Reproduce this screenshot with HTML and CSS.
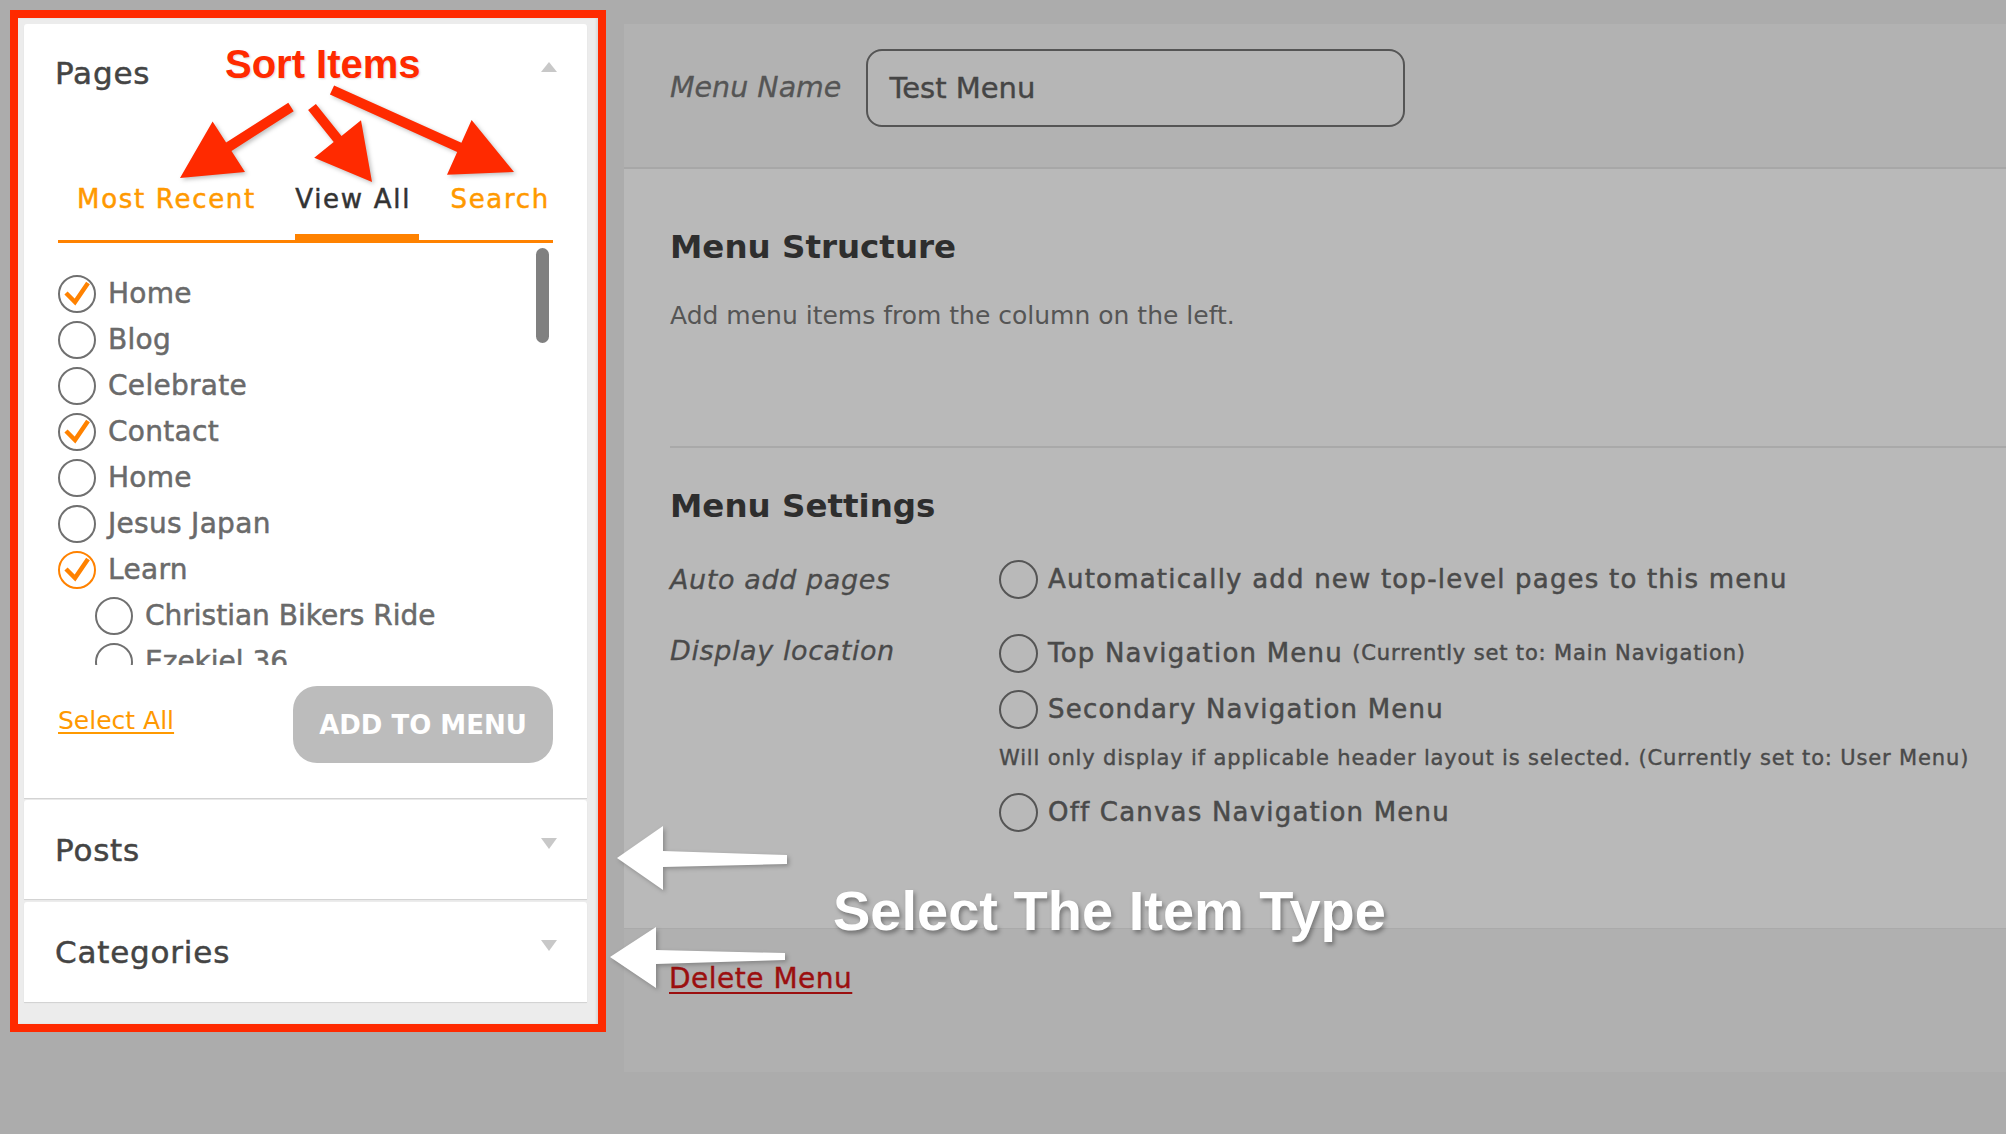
FILE: index.html
```html
<!DOCTYPE html>
<html>
<head>
<meta charset="utf-8">
<link rel="stylesheet" href="styles.css">
</head>
<body>
<div class="page">
  <aside class="frame">
    <section class="card pages">
      <div class="card-head">
        <span class="card-title">Pages</span>
        <span class="tri tri-up"></span>
      </div>
      <nav class="tabs">
        <span class="tab">Most Recent</span>
        <span class="tab active">View All</span>
        <span class="tab">Search</span>
      </nav>
      <ul class="list">
        <li class="row checked"><span class="check"><svg viewBox="0 0 38 38"><path d="M8 18 L17 27 L30 8"/></svg></span>Home</li>
        <li class="row"><span class="check"></span>Blog</li>
        <li class="row"><span class="check"></span>Celebrate</li>
        <li class="row checked"><span class="check"><svg viewBox="0 0 38 38"><path d="M8 18 L17 27 L30 8"/></svg></span>Contact</li>
        <li class="row"><span class="check"></span>Home</li>
        <li class="row"><span class="check"></span>Jesus Japan</li>
        <li class="row checked hot"><span class="check"><svg viewBox="0 0 38 38"><path d="M8 18 L17 27 L30 8"/></svg></span>Learn</li>
        <li class="row child"><span class="check"></span>Christian Bikers Ride</li>
        <li class="row child"><span class="check"></span>Ezekiel 36</li>
        <li class="scroll-thumb"></li>
      </ul>
      <div class="card-foot">
        <a class="select-all">Select All</a>
        <button class="add-btn">ADD TO MENU</button>
      </div>
    </section>
    <section class="card collapsed">
      <div class="card-head">
        <span class="card-title">Posts</span>
        <span class="tri tri-down"></span>
      </div>
    </section>
    <section class="card collapsed cats">
      <div class="card-head">
        <span class="card-title">Categories</span>
        <span class="tri tri-down"></span>
      </div>
    </section>
  </aside>

  <main class="panel">
    <header class="panel-head">
      <label class="name-label">Menu Name</label>
      <div class="name-input">Test Menu</div>
    </header>
    <div class="panel-body">
      <h2 class="sec-title first">Menu Structure</h2>
      <p class="sec-text">Add menu items from the column on the left.</p>
      <div class="divider"></div>
      <h2 class="sec-title settings">Menu Settings</h2>
      <div class="setting auto">
        <span class="set-label">Auto add pages</span>
        <div class="set-options">
          <div class="opt"><span class="radio"></span>Automatically add new top-level pages to this menu</div>
        </div>
      </div>
      <div class="setting loc">
        <span class="set-label">Display location</span>
        <div class="set-options">
          <div class="opt"><span class="radio"></span>Top Navigation Menu <small class="note-inline">(Currently set to: Main Navigation)</small></div>
          <div class="opt second"><span class="radio"></span>Secondary Navigation Menu</div>
          <div class="note">Will only display if applicable header layout is selected. (Currently set to: User Menu)</div>
          <div class="opt third"><span class="radio"></span>Off Canvas Navigation Menu</div>
        </div>
      </div>
    </div>
    <footer class="panel-foot">
      <a class="delete">Delete Menu</a>
    </footer>
  </main>
</div>

<div class="annot sort-items">Sort Items</div>
<div class="annot item-type">Select The Item Type</div>
<svg class="arrows" width="2006" height="1134" viewBox="0 0 2006 1134">
  <g class="red-arrows">
    <polygon points="288.3,102.8 226.1,142.5 212.6,121.4 180,178 245.0,172.0 231.5,150.9 293.7,111.2"/>
    <polygon points="315.9,103.9 341.5,135.9 361.0,120.3 372,182 314.2,157.8 333.7,142.1 308.1,110.1"/>
    <polygon points="334.1,85.4 461.4,142.7 471.6,119.9 514,172 447.0,174.7 457.2,151.9 329.9,94.6"/>
  </g>
  <g class="white-arrows">
    <polygon points="617,858 663,826 663,851 787,855 787,864 663,867 663,890"/>
    <polygon points="610,957 656,927 656,950 785,953 785,960 656,964 656,988"/>
  </g>
</svg>
</body>
</html>
```

FILE: styles.css
```css
* { box-sizing: border-box; }
html, body { margin: 0; padding: 0; }
body {
  width: 2006px;
  height: 1134px;
  overflow: hidden;
  position: relative;
  background: #acacac;
  font-family: "DejaVu Sans", "Noto Sans", sans-serif;
}
.page {
  display: flex;
  align-items: flex-start;
  padding: 10px 0 0 10px;
}

/* ---------- sidebar ---------- */
.frame {
  width: 596px;
  height: 1022px;
  border: 8px solid #ff2a00;
  background: #ececec;
  padding: 6px 11px 0 6px;
  display: flex;
  flex-direction: column;
  gap: 2px;
  box-shadow: inset -2px 0 2px rgba(0,0,0,0.08);
}
.card {
  background: #fff;
  border-radius: 3px 3px 0 0;
  box-shadow: 0 1px 1px rgba(0,0,0,0.12);
}
.pages { height: 774px; display: flex; flex-direction: column; }
.collapsed { height: 99px; }
.cats { height: 100px; margin-top: 1px; }
.card-head {
  display: flex;
  justify-content: space-between;
  align-items: flex-start;
  padding: 0 30px 0 31px;
  height: 98px;
}
.collapsed .card-head { height: 99px; }
.card-title {
  font-size: 31px;
  line-height: 98px;
  color: #444;
  letter-spacing: 0.8px;
  -webkit-text-stroke: 0.5px #444;
}
.collapsed .card-title { line-height: 100px; }
.tri {
  width: 0; height: 0;
  margin-top: 38px;
  border-left: 8px solid transparent;
  border-right: 8px solid transparent;
}
.tri-up { border-bottom: 10px solid #c8c8c8; }
.tri-down { border-top: 11px solid #c8c8c8; }

.tabs {
  margin: 0 34px 0 34px;
  padding: 57px 3px 21px 19px;
  display: flex;
  justify-content: space-between;
  border-bottom: 3px solid #ff8200;
}
.tab {
  position: relative;
  font-size: 26px;
  line-height: 40px;
  color: #ff9900;
  letter-spacing: 1.7px;
  -webkit-text-stroke: 0.5px #ff9900;
}
.tab.active { color: #333; -webkit-text-stroke: 0.5px #333; }
.tab.active::after {
  content: "";
  position: absolute;
  left: 0;
  right: -8px;
  bottom: -24px;
  height: 9px;
  background: #ff8200;
}

.list {
  list-style: none;
  margin: 0;
  padding: 28px 0 0 34px;
  height: 422px;
  overflow: hidden;
  position: relative;
}
.row {
  display: flex;
  align-items: center;
  gap: 12px;
  height: 46px;
  font-size: 28px;
  line-height: 46px;
  color: #6a6a6a;
  letter-spacing: 0.3px;
  -webkit-text-stroke: 0.5px #6a6a6a;
}
.row.child { padding-left: 37px; letter-spacing: 0; }
.check {
  flex: none;
  width: 38px;
  height: 38px;
  border: 2px solid #707070;
  border-radius: 50%;
  position: relative;
}
.row.hot .check { border-color: #ff8200; }
.check svg {
  position: absolute;
  left: -2px; top: -2px;
  width: 38px; height: 38px;
}
.check path {
  fill: none;
  stroke: #ff8200;
  stroke-width: 4.5;
  stroke-linejoin: miter;
}
.scroll-thumb {
  position: absolute;
  right: 38px;
  top: 5px;
  width: 13px;
  height: 95px;
  border-radius: 7px;
  background: #808080;
}
.card-foot {
  display: flex;
  justify-content: space-between;
  align-items: flex-start;
  padding: 0 34px 0 34px;
}
.select-all {
  margin-top: 41px;
  font-size: 25px;
  line-height: 30px;
  color: #ff9900;
  text-decoration: underline;
  text-underline-offset: 3px;
  text-decoration-thickness: 2px;
}
.add-btn {
  margin-top: 21px;
  width: 260px;
  height: 77px;
  border: none;
  border-radius: 24px;
  background: #bcbcbc;
  color: #fff;
  font-family: "DejaVu Sans", sans-serif;
  font-weight: bold;
  font-size: 26px;
  padding: 0;
}

/* ---------- main panel ---------- */
.panel {
  flex: 1;
  margin: 14px 0 0 18px;
  height: 1048px;
  display: flex;
  flex-direction: column;
  background: #b9b9b9;
}
.panel-head {
  height: 145px;
  background: #b2b2b2;
  border-bottom: 2px solid #a7a7a7;
  display: flex;
  align-items: flex-start;
  padding: 25px 0 0 46px;
  gap: 25px;
}
.name-label {
  font-style: italic;
  font-size: 28.5px;
  line-height: 78px;
  color: #555;
  -webkit-text-stroke: 0.3px #555;
}
.name-input {
  width: 539px;
  height: 78px;
  border: 2px solid #555;
  border-radius: 16px;
  background: #b6b6b6;
  font-size: 29px;
  line-height: 74px;
  padding-left: 21px;
  color: #454545;
  -webkit-text-stroke: 0.4px #454545;
}
.panel-body {
  height: 759px;
  padding: 58px 0 0 46px;
}
.sec-title {
  margin: 0;
  font-size: 32.5px;
  line-height: 40px;
  font-weight: bold;
  color: #2e2e2e;
}
.sec-title.settings { margin-top: 38px; }
.sec-text {
  margin: 32px 0 0 0;
  font-size: 25px;
  line-height: 34px;
  color: #555;
}
.divider {
  margin-top: 113px;
  height: 2px;
  background: #a9a9a9;
}
.setting {
  display: grid;
  grid-template-columns: 329px 1fr;
}
.setting.auto { margin-top: 34px; }
.setting.loc { margin-top: 35px; }
.set-label {
  font-style: italic;
  font-size: 27px;
  line-height: 39px;
  letter-spacing: 0.6px;
  color: #4a4a4a;
  -webkit-text-stroke: 0.3px #4a4a4a;
}
.setting.loc .set-label { line-height: 34px; }
.set-options { display: flex; flex-direction: column; }
.opt {
  display: flex;
  align-items: center;
  height: 39px;
  font-size: 26px;
  line-height: 39px;
  letter-spacing: 1.2px;
  color: #4a4a4a;
  white-space: pre;
  -webkit-text-stroke: 0.5px #4a4a4a;
}
.radio {
  flex: none;
  width: 39px;
  height: 39px;
  border: 2px solid #555;
  border-radius: 50%;
  margin-right: 10px;
}
.note-inline { font-size: 21px; letter-spacing: 0.85px; }
.opt.second { margin-top: 17px; }
.note {
  margin-top: 16px;
  font-size: 21px;
  line-height: 26px;
  letter-spacing: 0.85px;
  color: #4a4a4a;
  white-space: nowrap;
  -webkit-text-stroke: 0.4px #4a4a4a;
}
.opt.third { margin-top: 22px; }
.panel-foot {
  flex: 1;
  background: #b0b0b0;
  border-top: 1px solid #aaa;
  padding: 32px 0 0 45px;
}
.delete {
  font-size: 28px;
  line-height: 36px;
  letter-spacing: 0.5px;
  color: #9b0f0f;
  text-decoration: underline;
  text-decoration-thickness: 2px;
  text-underline-offset: 4px;
  -webkit-text-stroke: 0.4px #9b0f0f;
}

/* ---------- annotations ---------- */
.annot {
  position: absolute;
  font-family: "Liberation Sans", Arial, sans-serif;
  font-weight: bold;
  white-space: nowrap;
}
.sort-items {
  left: 225px;
  top: 44px;
  font-size: 40px;
  line-height: 40px;
  color: #ff2a00;
  text-shadow: 1px 1px 2px rgba(0,0,0,0.15);
}
.item-type {
  left: 833px;
  top: 883px;
  font-size: 56px;
  line-height: 56px;
  color: #fff;
  text-shadow: 2px 3px 4px rgba(0,0,0,0.35);
}
.arrows {
  position: absolute;
  left: 0;
  top: 0;
  pointer-events: none;
}
.red-arrows polygon {
  fill: #ff2a00;
  filter: drop-shadow(2px 2px 2px rgba(0,0,0,0.25));
}
.white-arrows polygon {
  fill: #fff;
  filter: drop-shadow(2px 2px 2px rgba(0,0,0,0.25));
}
```
